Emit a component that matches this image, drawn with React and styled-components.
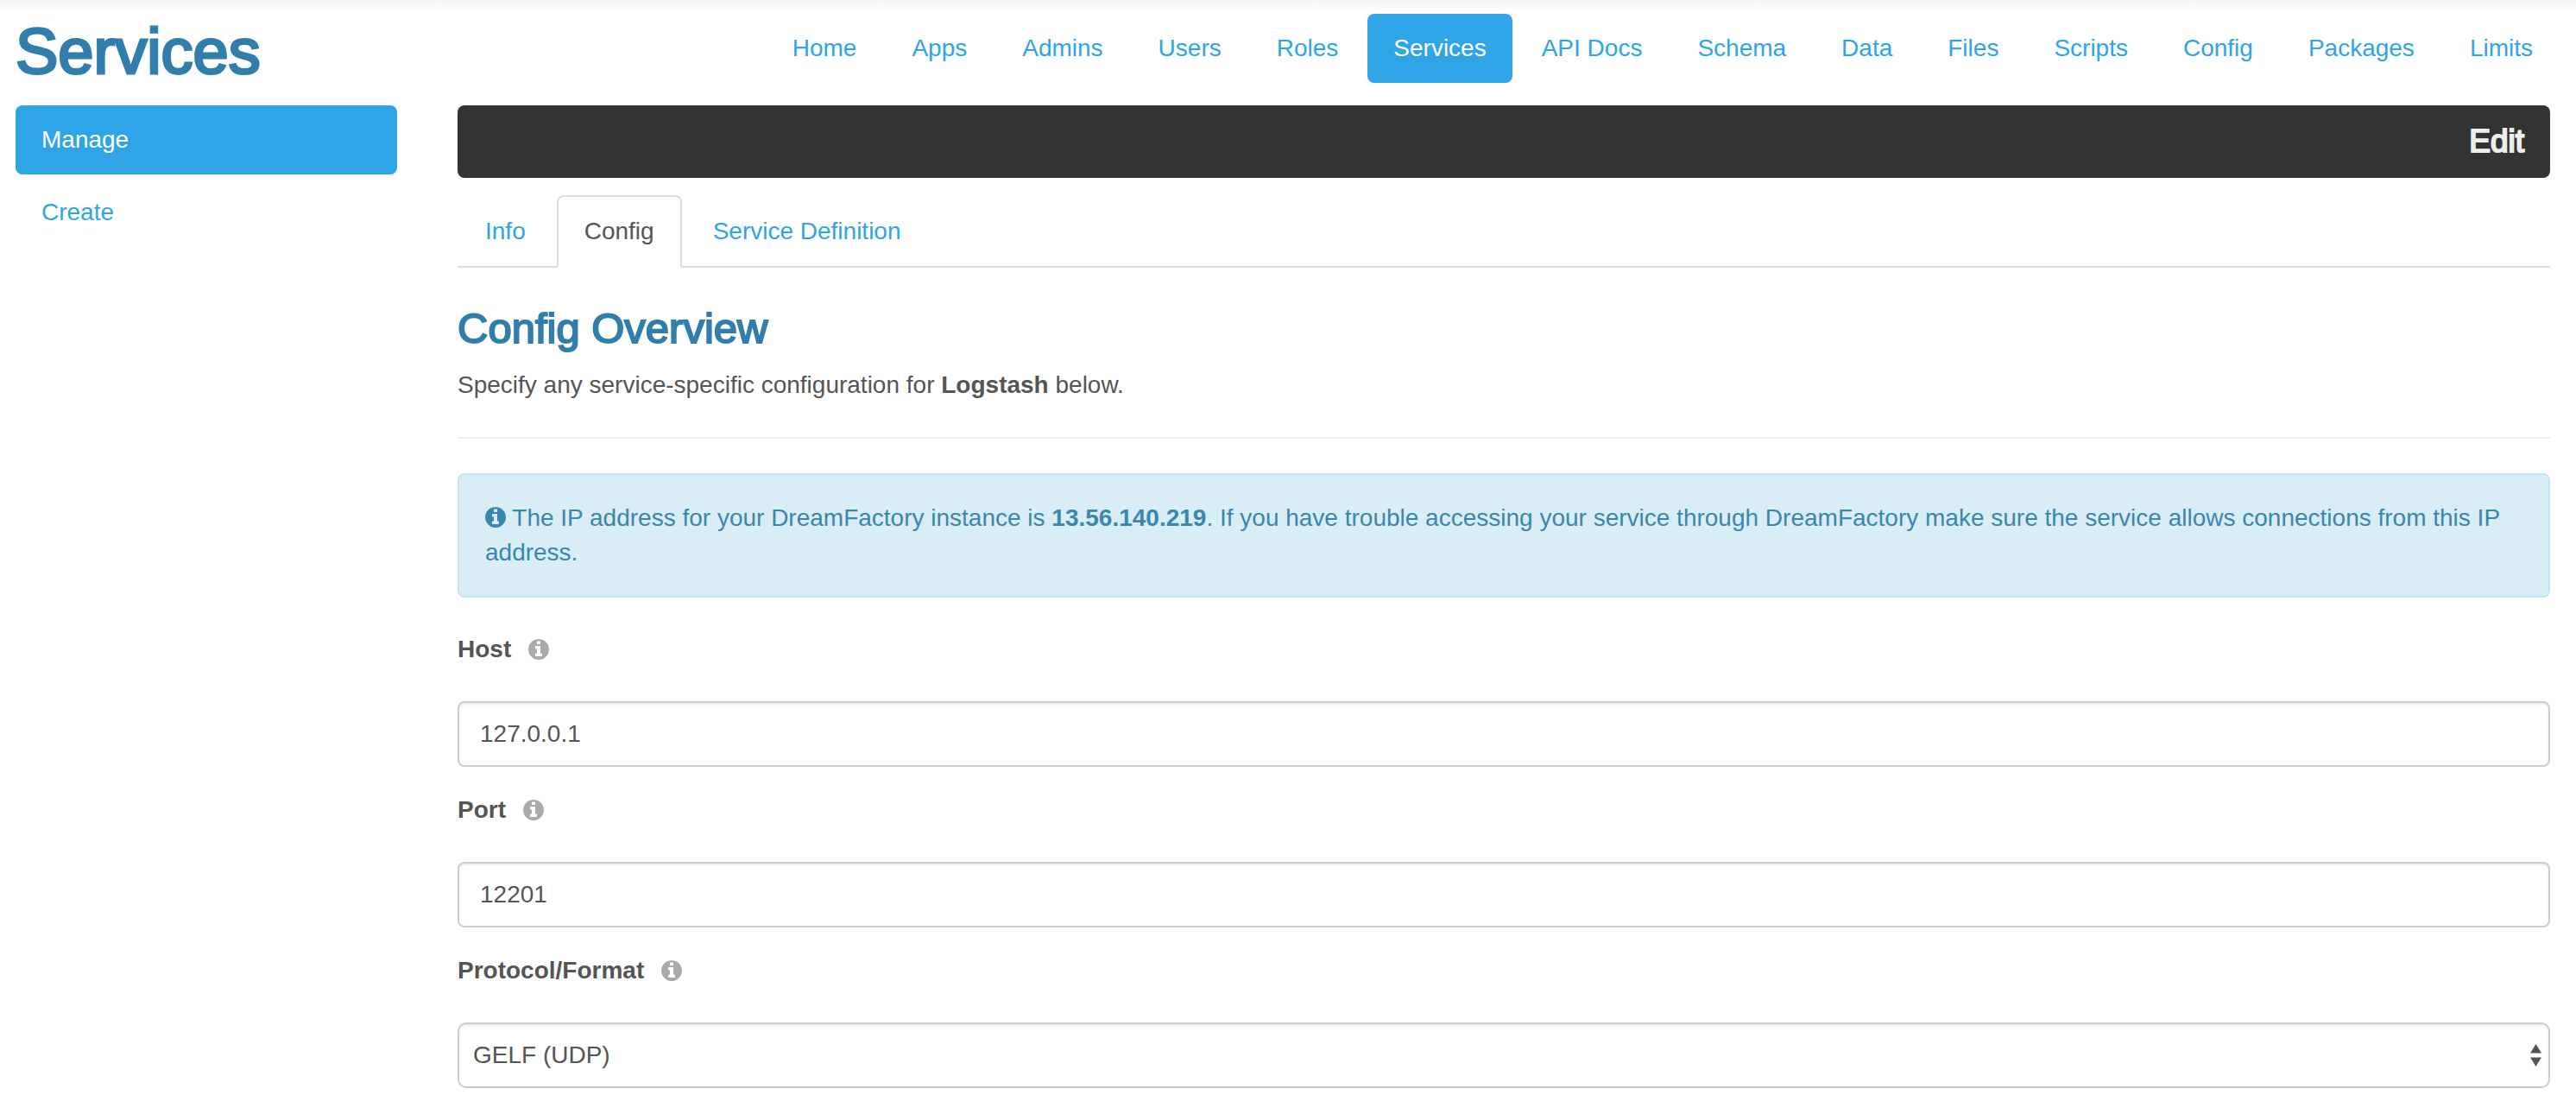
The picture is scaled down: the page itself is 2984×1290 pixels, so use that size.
import React, { useState } from "react";
import styled, { createGlobalStyle, css } from "styled-components";

const color = {
  link: "#2fa4e7",
  heading: "#317eac",
  text: "#555555",
  bar: "#333333",
  line: "#dddddd",
  field: "#cccccc",
};

const GlobalStyle = createGlobalStyle`
  *, *::before, *::after { box-sizing: border-box; }
  body {
    margin: 0;
    background: #ffffff;
    color: ${color.text};
    font-family: "Helvetica Neue", "Liberation Sans", Arial, sans-serif;
    font-size: 28px;
    line-height: 40px;
  }
  h1, h2, h3, p, ul { margin: 0; padding: 0; }
  ul { list-style: none; }
`;

/* Medium weight for families that only ship regular and bold. */
const mediumWeight = css`
  font-weight: 400;
  -webkit-text-stroke: 2px currentColor;
  paint-order: stroke fill;
`;

const Page = styled.div`
  padding-bottom: 30px;
  background: linear-gradient(#f4f4f4, #ffffff 12px);
`;

const Header = styled.header`
  display: flex;
  justify-content: space-between;
  align-items: flex-start;
  padding: 16px 20px 26px 18px;
`;

const PageTitle = styled.h1`
  ${mediumWeight}
  -webkit-text-stroke-width: 3px;
  color: ${color.heading};
  font-size: 74px;
  line-height: 88px;
  margin-bottom: -8px;
`;

const NavList = styled.ul`
  display: flex;
  flex-wrap: wrap;
  justify-content: flex-end;
  gap: 4px;
`;

const SideList = styled.ul`
  display: flex;
  flex-direction: column;
  gap: 4px;
`;

const PillLink = styled.a`
  display: block;
  padding: 20px 30px;
  border-radius: 8px;
  color: ${(p) => (p.$active ? "#ffffff" : color.link)};
  background: ${(p) => (p.$active ? color.link : "transparent")};
  text-decoration: none;
`;

const Columns = styled.div`
  display: flex;
  gap: 70px;
  padding: 0 30px 0 18px;
`;

const Sidebar = styled.nav`
  flex: 0 0 442px;
`;

const Main = styled.main`
  flex: 1;
  min-width: 0;
`;

const TitleBar = styled.div`
  display: flex;
  justify-content: flex-end;
  padding: 22px 30px;
  margin-bottom: 20px;
  border-radius: 8px;
  background: ${color.bar};
`;

const BarTitle = styled.h3`
  ${mediumWeight}
  color: #eeeeee;
  font-size: 37px;
  line-height: 40px;
`;

const Tabs = styled.div`
  display: flex;
  gap: 4px;
  border-bottom: 2px solid ${color.line};
  margin-bottom: 44px;
`;

const Tab = styled.button`
  margin: 0 0 -2px;
  padding: 20px 30px;
  border: 2px solid transparent;
  border-radius: 8px 8px 0 0;
  background: transparent;
  color: ${color.link};
  font: inherit;
  cursor: pointer;

  &[aria-selected="true"] {
    border-color: ${color.line} ${color.line} #ffffff;
    background: #ffffff;
    color: ${color.text};
  }
`;

const SectionTitle = styled.h2`
  ${mediumWeight}
  margin-bottom: 20px;
  color: ${color.heading};
  font-size: 49px;
  line-height: 52px;
`;

const Rule = styled.hr`
  margin: 40px 0;
  border: 0;
  border-top: 2px solid #eeeeee;
`;

const Alert = styled.div`
  padding: 30px;
  margin-bottom: 40px;
  border: 2px solid #bce8f1;
  border-radius: 8px;
  background: #d9edf7;
  color: #3a87ad;
`;

const Form = styled.form`
  display: flex;
  flex-direction: column;
  gap: 30px;
`;

const Field = styled.div`
  display: flex;
  flex-direction: column;
  gap: 40px;
`;

const LabelRow = styled.div`
  display: flex;
  align-items: center;
  gap: 20px;
`;

const Label = styled.label`
  font-weight: 700;
`;

const HelpButton = styled.button`
  display: flex;
  padding: 0;
  border: 0;
  background: none;
  color: #aaaaaa;
  cursor: pointer;
`;

const IconSvg = styled.svg`
  width: 24px;
  height: 24px;
  fill: currentColor;
  vertical-align: -2px;
`;

const controlStyle = css`
  display: block;
  width: 100%;
  height: 76px;
  margin: 0;
  border: 2px solid ${color.field};
  background: #ffffff;
  box-shadow: inset 0 2px 2px rgba(0, 0, 0, 0.075);
  color: ${color.text};
  font: inherit;
`;

const TextInput = styled.input`
  ${controlStyle}
  padding: 16px 24px;
  border-radius: 8px;
`;

const SelectWrap = styled.div`
  position: relative;
`;

const Select = styled.select`
  ${controlStyle}
  padding: 0 40px 0 16px;
  border-radius: 10px;
  appearance: none;
`;

const SelectArrows = styled.svg`
  position: absolute;
  top: 25px;
  right: 10px;
  width: 13px;
  height: 26px;
  fill: ${color.text};
  pointer-events: none;
`;

function InfoIcon() {
  return (
    <IconSvg viewBox="0 128 1536 1536" aria-hidden="true">
      <path d="M1024 1376v-160q0-14-9-23t-23-9h-96v-512q0-14-9-23t-23-9h-320q-14 0-23 9t-9 23v160q0 14 9 23t23 9h96v320h-96q-14 0-23 9t-9 23v160q0 14 9 23t23 9h448q14 0 23-9t9-23zm-128-896v-160q0-14-9-23t-23-9h-192q-14 0-23 9t-9 23v160q0 14 9 23t23 9h192q14 0 23-9t9-23zm640 416q0 209-103 385.5t-279.5 279.5-385.5 103-385.5-103-279.5-279.5-103-385.5 103-385.5 279.5-279.5 385.5-103 385.5 103 279.5 279.5 103 385.5z" />
    </IconSvg>
  );
}

function FormField({ id, label, children }) {
  return (
    <Field>
      <LabelRow>
        <Label htmlFor={id}>{label}</Label>
        <HelpButton type="button" aria-label={`${label} help`}>
          <InfoIcon />
        </HelpButton>
      </LabelRow>
      {children}
    </Field>
  );
}

const NAV = [
  "Home", "Apps", "Admins", "Users", "Roles", "Services", "API Docs",
  "Schema", "Data", "Files", "Scripts", "Config", "Packages", "Limits",
];
const SIDE = ["Manage", "Create"];
const TABS = ["Info", "Config", "Service Definition"];

function LinkItems({ items, active }) {
  return items.map((item) => (
    <li key={item}>
      <PillLink
        href="#"
        $active={item === active}
        aria-current={item === active ? "page" : undefined}
      >
        {item}
      </PillLink>
    </li>
  ));
}

export default function App() {
  const [tab, setTab] = useState("Config");

  return (
    <>
      <GlobalStyle />
      <Page>
        <Header>
          <PageTitle>Services</PageTitle>
          <nav aria-label="Sections">
            <NavList>
              <LinkItems items={NAV} active="Services" />
            </NavList>
          </nav>
        </Header>
        <Columns>
          <Sidebar aria-label="Services">
            <SideList>
              <LinkItems items={SIDE} active="Manage" />
            </SideList>
          </Sidebar>
          <Main>
            <TitleBar>
              <BarTitle>Edit</BarTitle>
            </TitleBar>
            <Tabs role="tablist">
              {TABS.map((name) => (
                <Tab
                  key={name}
                  type="button"
                  role="tab"
                  aria-selected={name === tab}
                  onClick={() => setTab(name)}
                >
                  {name}
                </Tab>
              ))}
            </Tabs>
            <SectionTitle>Config Overview</SectionTitle>
            <p>
              Specify any service-specific configuration for <strong>Logstash</strong> below.
            </p>
            <Rule />
            <Alert>
              <InfoIcon /> The IP address for your DreamFactory instance is{" "}
              <strong>13.56.140.219</strong>. If you have trouble accessing your service
              through DreamFactory make sure the service allows connections from this IP
              address.
            </Alert>
            <Form onSubmit={(e) => e.preventDefault()}>
              <FormField id="host" label="Host">
                <TextInput id="host" type="text" defaultValue="127.0.0.1" />
              </FormField>
              <FormField id="port" label="Port">
                <TextInput id="port" type="text" defaultValue="12201" />
              </FormField>
              <FormField id="protocol" label="Protocol/Format">
                <SelectWrap>
                  <Select id="protocol" defaultValue="gelf-udp">
                    <option value="gelf-udp">GELF (UDP)</option>
                  </Select>
                  <SelectArrows viewBox="0 0 13 26" aria-hidden="true">
                    <path d="M6.5 0 13 10.5H0zM0 15.5h13L6.5 26z" />
                  </SelectArrows>
                </SelectWrap>
              </FormField>
            </Form>
          </Main>
        </Columns>
      </Page>
    </>
  );
}
